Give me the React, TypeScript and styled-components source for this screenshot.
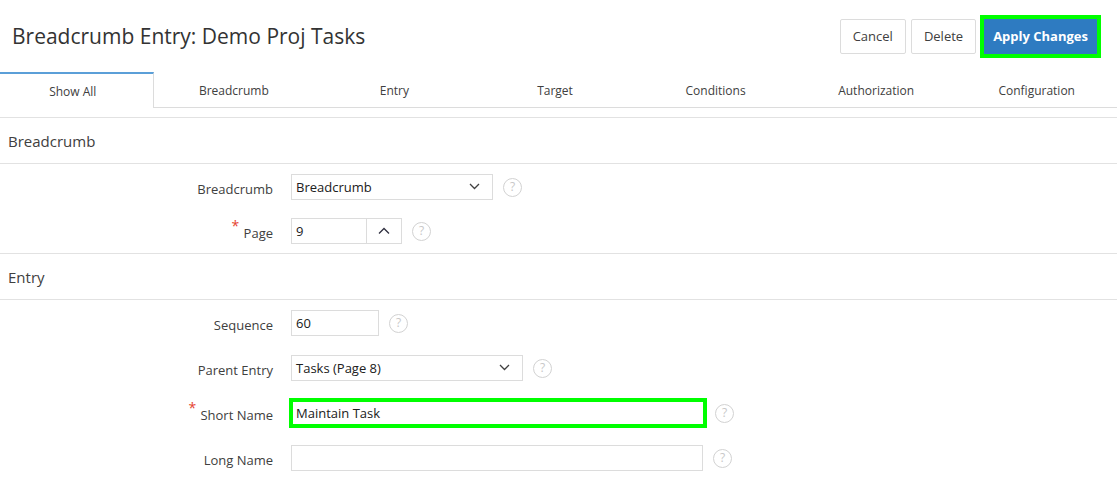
import React from "react";
import styled, { createGlobalStyle } from "styled-components";

const GlobalStyle = createGlobalStyle`
  html, body { margin: 0; padding: 0; background: #fff; }
  body { font-family: "Open Sans", "Noto Sans", sans-serif; color: #404040; }
  * { box-sizing: border-box; }
`;

const Page = styled.div`
  width: 1117px;
  overflow: hidden;
`;

const Header = styled.header`
  display: flex;
  align-items: center;
  justify-content: space-between;
  height: 72px;
  padding: 0 20px 0 12px;
`;

const Title = styled.h1`
  margin: 0;
  font-size: 21px;
  font-weight: 400;
  color: #333;
`;

const Buttons = styled.div`
  display: flex;
  align-items: center;
  gap: 5px;
`;

const Button = styled.button<{ $primary?: boolean }>`
  height: 35px;
  padding: 0 ${(p) => (p.$primary ? "8px" : "12px")};
  font-family: inherit;
  font-size: 13px;
  font-weight: ${(p) => (p.$primary ? 700 : 400)};
  color: ${(p) => (p.$primary ? "#fff" : "#404040")};
  background: ${(p) => (p.$primary ? "#2e7bc1" : "#fff")};
  border: 1px solid ${(p) => (p.$primary ? "#2e7bc1" : "#dcdcdc")};
  border-radius: ${(p) => (p.$primary ? "0" : "2px")};
  margin-left: ${(p) => (p.$primary ? "3px" : "0")};
  outline: ${(p) => (p.$primary ? "4px solid #00ff00" : "none")};
`;

const Tabs = styled.nav`
  display: grid;
  grid-template-columns: repeat(7, 1fr);
  margin-left: -7px;
  width: calc(100% + 7px);
  height: 36px;
`;

const Tab = styled.div<{ $active?: boolean }>`
  display: flex;
  align-items: center;
  justify-content: center;
  font-size: 12px;
  color: #404040;
  padding-top: ${(p) => (p.$active ? "0" : "2px")};
  border-top: ${(p) => (p.$active ? "2px solid #5b9fd8" : "none")};
  border-right: ${(p) => (p.$active ? "1px solid #dcdcdc" : "none")};
  border-bottom: ${(p) => (p.$active ? "none" : "1px solid #dcdcdc")};
`;

const Gap = styled.div`
  height: 9px;
`;

const Region = styled.section`
  border-top: 1px solid #e2e2e2;
`;

const RegionHeader = styled.h2`
  margin: 0;
  height: 46px;
  display: flex;
  align-items: center;
  padding-left: 8px;
  font-size: 15px;
  font-weight: 400;
  color: #404040;
  border-bottom: 1px solid #e2e2e2;
`;

const RegionBody = styled.div<{ $gap: number }>`
  display: flex;
  flex-direction: column;
  gap: ${(p) => p.$gap}px;
  padding: 10px 0 9px;
`;

const Row = styled.div`
  display: grid;
  grid-template-columns: 273px auto;
  column-gap: 18px;
  align-items: center;
  height: 26px;
`;

const Label = styled.label`
  position: relative;
  justify-self: end;
  font-size: 13px;
  color: #404040;
  padding-top: 4px;
`;

const Required = styled.span`
  position: absolute;
  left: -12px;
  top: -4px;
  color: #e5432f;
  font-size: 14px;
`;

const Field = styled.div`
  display: flex;
  align-items: center;
  gap: 10px;
`;

const Box = styled.div<{ $w: number; $focus?: boolean }>`
  position: relative;
  display: flex;
  align-items: center;
  width: ${(p) => p.$w}px;
  height: 26px;
  border: 1px solid #dcdcdc;
  background: #fff;
  padding-left: 4px;
  font-size: 13px;
  color: #202020;
  outline: ${(p) => (p.$focus ? "4px solid #00ff00" : "none")};
  outline-offset: -2px;
`;

const Chevron = styled.span`
  position: absolute;
  right: 12px;
  top: 8px;
  display: flex;
`;

const SpinGroup = styled.div`
  display: flex;
`;

const SpinButton = styled.div`
  width: 35px;
  height: 26px;
  border: 1px solid #dcdcdc;
  border-left: none;
  display: flex;
  align-items: center;
  justify-content: center;
`;

const Help = styled.span`
  width: 19px;
  height: 19px;
  border-radius: 50%;
  border: 1px solid #d2d2d2;
  color: #c8c8c8;
  font-size: 12px;
  display: flex;
  align-items: center;
  justify-content: center;
  line-height: 1;
`;

const ChevronDown = () => (
  <svg width="11" height="7" viewBox="0 0 11 7">
    <path d="M1 1l4.5 4.5L10 1" fill="none" stroke="#404040" strokeWidth="1.3" />
  </svg>
);

const ChevronUp = () => (
  <svg width="12" height="8" viewBox="0 0 12 8">
    <path d="M1 6.5L6 1.5l5 5" fill="none" stroke="#303040" strokeWidth="1.3" />
  </svg>
);

type FieldRowProps = {
  label: string;
  required?: boolean;
  children: React.ReactNode;
};

const FieldRow = ({ label, required, children }: FieldRowProps) => (
  <Row>
    <Label>
      {required && <Required>*</Required>}
      {label}
    </Label>
    <Field>
      {children}
      <Help>?</Help>
    </Field>
  </Row>
);

const tabs = [
  "Show All",
  "Breadcrumb",
  "Entry",
  "Target",
  "Conditions",
  "Authorization",
  "Configuration",
];

export default function App() {
  return (
    <Page>
      <GlobalStyle />
      <Header>
        <Title>Breadcrumb Entry: Demo Proj Tasks</Title>
        <Buttons>
          <Button>Cancel</Button>
          <Button>Delete</Button>
          <Button $primary>Apply Changes</Button>
        </Buttons>
      </Header>
      <Tabs>
        {tabs.map((t, i) => (
          <Tab key={t} $active={i === 0}>
            {t}
          </Tab>
        ))}
      </Tabs>
      <Gap />
      <Region>
        <RegionHeader>Breadcrumb</RegionHeader>
        <RegionBody $gap={18}>
          <FieldRow label="Breadcrumb">
            <Box $w={202}>
              Breadcrumb
              <Chevron>
                <ChevronDown />
              </Chevron>
            </Box>
          </FieldRow>
          <FieldRow label="Page" required>
            <SpinGroup>
              <Box $w={76}>9</Box>
              <SpinButton>
                <ChevronUp />
              </SpinButton>
            </SpinGroup>
          </FieldRow>
        </RegionBody>
      </Region>
      <Region>
        <RegionHeader>Entry</RegionHeader>
        <RegionBody $gap={19}>
          <FieldRow label="Sequence">
            <Box $w={88}>60</Box>
          </FieldRow>
          <FieldRow label="Parent Entry">
            <Box $w={232}>
              Tasks (Page 8)
              <Chevron>
                <ChevronDown />
              </Chevron>
            </Box>
          </FieldRow>
          <FieldRow label="Short Name" required>
            <Box $w={414} $focus>
              Maintain Task
            </Box>
          </FieldRow>
          <FieldRow label="Long Name">
            <Box $w={412} />
          </FieldRow>
        </RegionBody>
      </Region>
    </Page>
  );
}
